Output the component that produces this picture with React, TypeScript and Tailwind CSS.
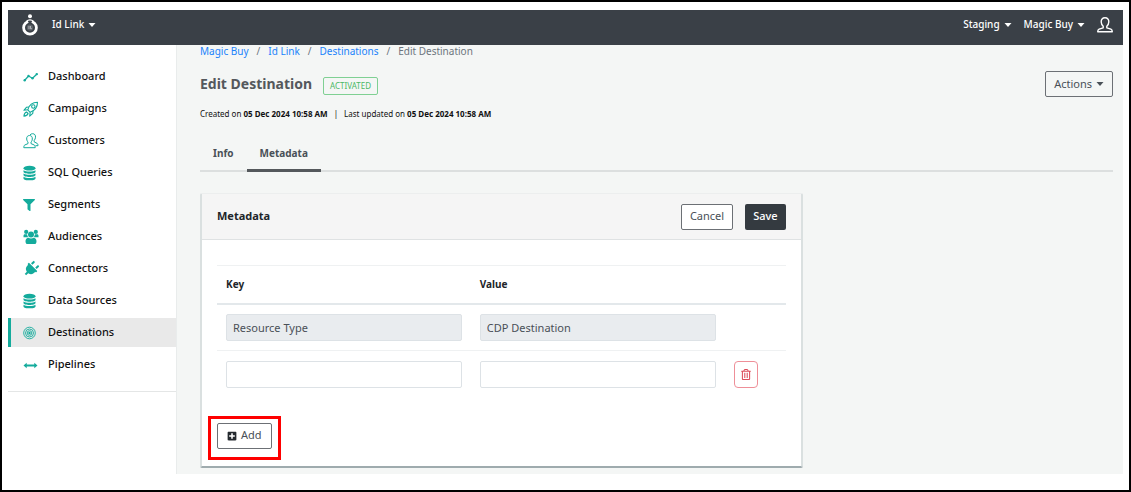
import type { ReactNode } from "react";
import { FaFilter, FaPlug, FaPlusSquare, FaRegTrashAlt } from "react-icons/fa";
import { clsx } from "clsx";

function Caret() {
  return (
    <svg viewBox="0 0 8 4" className="h-1 w-2" fill="currentColor">
      <path d="M.5 0h7L4 4Z" />
    </svg>
  );
}

function ChartIcon() {
  return (
    <svg viewBox="0 0 16 16" className="h-4 w-4" fill="none" stroke="currentColor" strokeWidth="1.3">
      <path d="M1.500 11.500 5.500 7 9.500 9.200 14 5" />
      <g fill="currentColor" stroke="none">
        <circle cx="1.700" cy="11.300" r="1.200" />
        <circle cx="5.500" cy="7" r="1.200" />
        <circle cx="9.500" cy="9.200" r="1.200" />
        <circle cx="13.800" cy="5.100" r="1.200" />
      </g>
    </svg>
  );
}

function RocketIcon() {
  return (
    <svg viewBox="0 0 16 16" className="h-4 w-4" fill="none" stroke="currentColor" strokeWidth="1.1" strokeLinejoin="round">
      <path d="M4.800 8.800C6 4.500 9 1.300 14.500 1.300c0 5.500-3.200 8.500-7.300 10Z" />
      <circle cx="10.300" cy="5.500" r="1.700" />
      <path d="M6 6 3.600 6.200.9 9.300l3.900-.5M10 9.800l-.2 2.500-3.100 2.800.5-3.900" />
      <path d="M3.500 11C2 11.500 1.200 12.800.9 15.100c2.300-.2 3.700-1 4.200-2.600Z" />
    </svg>
  );
}

function CustomersIcon() {
  return (
    <svg viewBox="0 0 16 16" className="h-4 w-4" fill="none" stroke="currentColor" strokeWidth="1" strokeLinejoin="round">
      <path d="M6.500 2.500C4.500 2.500 3.500 4 3.700 6c.1 1.500.7 2.400 1.300 3v1.600L1.800 12C1 12.400.8 13.500.8 14.700h11.400c0-1.200-.2-2.300-1-2.700L8 10.600V9c.7-.6 1.200-1.500 1.300-3 .2-2-.8-3.500-2.800-3.500Z" />
      <path d="M7 1.900C7.700 1.100 8.600.7 9.600.7c2 0 3.100 1.500 2.900 3.500-.1 1.500-.6 2.500-1.300 3.100v1.600l3 1.500c.6.400.8 1.200.8 2.300h-2.500" />
    </svg>
  );
}

function DatabaseIcon() {
  return (
    <svg viewBox="0 0 14 16" className="h-4 w-3.5" fill="currentColor">
      <ellipse cx="6.500" cy="3.200" rx="6" ry="2.400" />
      <path d="M.5 5.200c1.800 1.700 10.200 1.700 12 0v1.600c0 2.600-12 2.600-12 0Z" />
      <path d="M.5 8.500c1.800 1.700 10.200 1.700 12 0v1.600c0 2.600-12 2.600-12 0Z" />
      <path d="M.5 11.800c1.800 1.700 10.200 1.700 12 0v1.600c0 2.600-12 2.600-12 0Z" />
    </svg>
  );
}

function AudiencesIcon() {
  return (
    <svg viewBox="0 0 16 16" className="h-4 w-4" fill="currentColor">
      <circle cx="3.200" cy="2.900" r="2.100" />
      <circle cx="12.800" cy="2.900" r="2.100" />
      <circle cx="8" cy="5.600" r="3" />
      <path d="M1.800 5.300h2.300c.2 1.500.6 2.300 1.300 3H.500V6.800c0-.9.500-1.500 1.300-1.500ZM14.200 5.300h-2.300c-.2 1.500-.6 2.300-1.300 3h4.900V6.800c0-.9-.5-1.500-1.300-1.500Z" />
      <path d="M5.200 8.800c1.700 1 3.900 1 5.600 0 1.900.2 2.700 1.700 2.700 3.700 0 1.700-.8 2.600-2.200 2.600H4.700c-1.400 0-2.200-.9-2.200-2.600 0-2 .8-3.500 2.700-3.700Z" />
    </svg>
  );
}

function TargetIcon() {
  return (
    <svg viewBox="0 0 14 14" className="h-3.5 w-3.5" fill="none" stroke="currentColor" strokeWidth=".9">
      <circle cx="6.500" cy="7" r="5.800" />
      <circle cx="6.500" cy="7" r="4" />
      <circle cx="6.500" cy="7" r="2.300" />
      <circle cx="6.500" cy="7" r="1.200" fill="currentColor" stroke="none" />
    </svg>
  );
}

function PipelineIcon() {
  return (
    <svg viewBox="0 0 16 16" className="h-4 w-4" fill="currentColor">
      <path d="M.5 8.500 3.700 5.700v1.900h7.600V5.700l3.200 2.800-3.200 2.800V9.400H3.700v1.900Z" />
    </svg>
  );
}

function UserIcon() {
  return (
    <svg viewBox="0 0 16 16" className="h-4 w-4" fill="none" stroke="currentColor" strokeWidth="1.4" strokeLinejoin="round">
      <path d="M8 .8C5.400.8 4.100 2.600 4.200 5c.1 1.900.9 3.300 2 4.300v1.500L2.100 12.200c-1 .4-1.400 1.200-1.400 2.600h14.600c0-1.400-.4-2.200-1.400-2.600l-4.100-1.400V9.300c1.100-1 1.900-2.400 2-4.300C11.900 2.600 10.600.8 8 .8Z" />
    </svg>
  );
}

function Logo() {
  return (
    <svg viewBox="0 0 16 22" className="h-[22px] w-4" aria-label="Home">
      <circle cx="8" cy="13.700" r="6.400" fill="none" stroke="#fff" strokeWidth="2.800" />
      <path d="M4.800 4.500h6.400L9.300 9H6.700Z" fill="#3b4148" />
      <circle cx="8" cy="2.300" r="2" fill="#fff" />
      <path d="M4.500 7.300C5.500 6.300 6.700 5.900 8 5.900s2.500.4 3.500 1.400" stroke="#fff" strokeWidth="1.200" fill="none" />
      <circle cx="8" cy="13.600" r="3.200" fill="#5c6268" />
      <path d="M7 12v3M8.500 12v2.700h1.400" stroke="#d4d6d8" strokeWidth=".7" fill="none" />
    </svg>
  );
}

const navItems: { label: string; icon: ReactNode }[] = [
  { label: "Dashboard", icon: <ChartIcon /> },
  { label: "Campaigns", icon: <RocketIcon /> },
  { label: "Customers", icon: <CustomersIcon /> },
  { label: "SQL Queries", icon: <DatabaseIcon /> },
  { label: "Segments", icon: <FaFilter className="h-3 w-3" /> },
  { label: "Audiences", icon: <AudiencesIcon /> },
  { label: "Connectors", icon: <FaPlug className="h-4 w-4 rotate-45" /> },
  { label: "Data Sources", icon: <DatabaseIcon /> },
  { label: "Destinations", icon: <TargetIcon /> },
  { label: "Pipelines", icon: <PipelineIcon /> },
];

const rows = [
  { key: "Resource Type", value: "CDP Destination", locked: true },
  { key: "", value: "", locked: false },
];

function Header() {
  return (
    <header className="flex h-[35px] items-center bg-[#3a4047] pr-2.5 pb-1.5 pl-3.5 text-[10px] font-medium text-white">
      <Logo />
      <button type="button" className="ml-3.5 flex items-center gap-1">
        Id Link <Caret />
      </button>
      <div className="ml-auto flex items-center gap-3">
        <button type="button" className="flex items-center gap-1">
          Staging <Caret />
        </button>
        <button type="button" className="flex items-center gap-1">
          Magic Buy <Caret />
        </button>
        <button type="button" aria-label="Account">
          <UserIcon />
        </button>
      </div>
    </header>
  );
}

function Sidebar() {
  return (
    <aside className="w-[169px] shrink-0 border-r border-[#e9ecec] bg-white">
      <nav className="flex flex-col gap-[3px] border-b border-[#e4e6e6] pt-[17px] pb-3">
        {navItems.map(({ label, icon }) => (
          <a
            key={label}
            href="#"
            className={clsx(
              "flex h-[29px] items-center border-l-3 pl-3 text-[11px] font-medium text-[#111]",
              label === "Destinations" ? "border-[#14ab9c] bg-[#e9e9e9]" : "border-transparent",
            )}
          >
            <span className="mr-[9px] flex w-4 shrink-0 text-[#14ab9c]">{icon}</span>
            {label}
          </a>
        ))}
      </nav>
    </aside>
  );
}

function Breadcrumb() {
  return (
    <nav aria-label="Breadcrumb" className="flex h-3 items-center gap-2 text-[10px] text-[#6c757d]">
      <a href="#" className="text-[#1a82fb]">Magic Buy</a>
      <span>/</span>
      <a href="#" className="text-[#1a82fb]">Id Link</a>
      <span>/</span>
      <a href="#" className="text-[#1a82fb]">Destinations</a>
      <span>/</span>
      <span>Edit Destination</span>
    </nav>
  );
}

function MetadataCard() {
  return (
    <section className="mt-[21px] w-[66%] rounded-xs border-x-2 border-t border-b-2 border-x-[#dae0e0] border-t-[#eceeee] border-b-[#9fabae] bg-white">
      <div className="flex h-[46px] items-center border-b border-[#dfe2e3] bg-[#f5f5f5] px-[15px]">
        <h2 className="text-[11px] font-bold text-[#212529]">Metadata</h2>
        <button type="button" className="ml-auto h-[26px] rounded-xs border border-[#6c7075] bg-white px-2 text-[11px] text-[#495057]">
          Cancel
        </button>
        <button type="button" className="ml-3 h-[26px] rounded-xs bg-[#343a40] px-2 text-[11px] font-medium text-white">
          Save
        </button>
      </div>
      <div className="px-[15px] pt-[25px] pb-[17px]">
        <table className="w-full table-fixed border-collapse text-left">
          <colgroup>
            <col />
            <col />
            <col className="w-[61px]" />
          </colgroup>
          <thead>
            <tr className="h-[38px] border-t border-b-2 border-t-[#eff1f2] border-b-[#e3e8eb] text-[10px] text-[#212529]">
              <th className="px-[9px] font-bold">Key</th>
              <th className="px-[9px] font-bold">Value</th>
              <th aria-label="Actions" />
            </tr>
          </thead>
          <tbody>
            {rows.map((row, i) => (
              <tr key={i} className={clsx("h-[47px]", i > 0 && "border-t border-[#eff1f2]")}>
                {[row.key, row.value].map((text, col) => (
                  <td key={col} className="px-[9px]">
                    <input
                      type="text"
                      aria-label={col === 0 ? "Key" : "Value"}
                      defaultValue={text}
                      disabled={row.locked}
                      className="block h-[27px] w-full rounded-xs border border-[#dde2e6] bg-white px-1.5 text-[11px] text-[#495057] disabled:bg-[#e9ecef]"
                    />
                  </td>
                ))}
                <td className="px-[9px]">
                  {!row.locked && (
                    <button
                      type="button"
                      aria-label="Delete row"
                      className="flex h-[27px] w-6 items-center justify-center rounded-sm border border-[#ee8f98] text-[#dc4c5a]"
                    >
                      <FaRegTrashAlt className="h-[11px] w-2.5" />
                    </button>
                  )}
                </td>
              </tr>
            ))}
          </tbody>
        </table>
        <div className="relative mt-[25px] w-fit">
          <button
            type="button"
            className="flex h-[26px] items-center gap-1 rounded-xs border border-[#6c7075] px-[9px] text-[11px] text-[#495057]"
          >
            <FaPlusSquare className="h-2.5 w-2.5 text-[#24292e]" />
            Add
          </button>
          {/* highlight around the add button */}
          <div className="pointer-events-none absolute -inset-x-[9px] -top-[7px] -bottom-[11px] border-3 border-[#fe0000]" />
        </div>
      </div>
    </section>
  );
}

export default function App() {
  return (
    <div className="min-h-screen border-2 border-black bg-white px-1.5 pt-2 pb-4 font-['Noto_Sans',sans-serif]">
      <Header />
      <div className="flex">
        <Sidebar />
        <main className="min-w-0 flex-1 bg-[#f4f6f5] pr-2.5 pb-1.5 pl-[23px]">
          <Breadcrumb />
          <div className="mt-[15px] flex h-6 items-center">
            <h1 className="text-sm font-bold text-[#54585c]">Edit Destination</h1>
            <span className="mt-1 ml-[11px] rounded-xs border border-[#7fd093] px-1.5 text-[8px] leading-4 text-[#4bb865]">
              ACTIVATED
            </span>
            <button
              type="button"
              className="ml-auto flex h-[26px] items-center gap-1 rounded-xs border border-[#6c7075] px-2 text-[11px] text-[#495057]"
            >
              Actions <Caret />
            </button>
          </div>
          <p className="mt-2.5 text-[8px] leading-4 text-[#111]">
            Created on <b>05 Dec 2024 10:58 AM</b>
            <span className="mx-1.5">|</span>
            Last updated on <b>05 Dec 2024 10:58 AM</b>
          </p>
          <div role="tablist" className="mt-3.5 flex h-9 border-b-2 border-[#dcdfdf] text-[10px] font-bold text-[#495057]">
            <button type="button" role="tab" aria-selected="false" className="-mb-0.5 border-b-3 border-transparent px-[13px] pt-0.5">
              Info
            </button>
            <button type="button" role="tab" aria-selected="true" className="-mb-0.5 border-b-3 border-[#54585c] px-[13px] pt-0.5">
              Metadata
            </button>
          </div>
          <MetadataCard />
        </main>
      </div>
    </div>
  );
}
